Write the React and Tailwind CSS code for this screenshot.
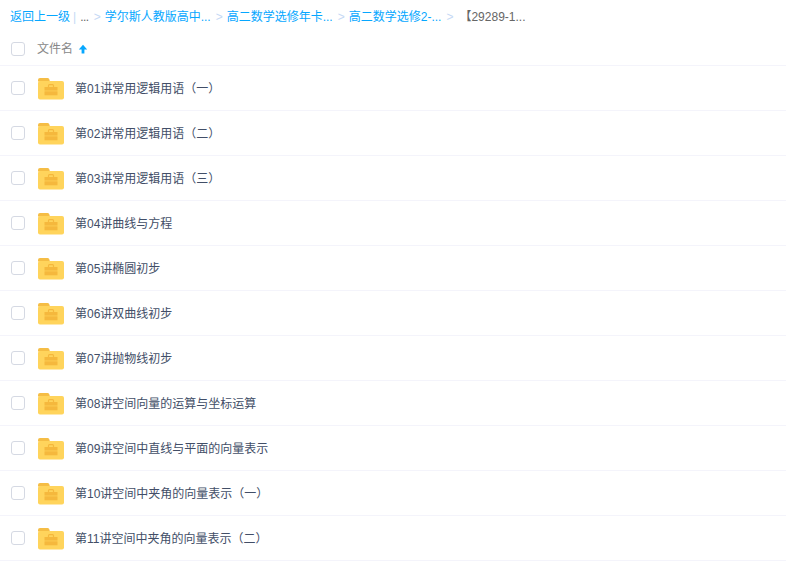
import React from "react";

const files = [
  "第01讲常用逻辑用语(一)",
  "第02讲常用逻辑用语(二)",
  "第03讲常用逻辑用语(三)",
  "第04讲曲线与方程",
  "第05讲椭圆初步",
  "第06讲双曲线初步",
  "第07讲抛物线初步",
  "第08讲空间向量的运算与坐标运算",
  "第09讲空间中直线与平面的向量表示",
  "第10讲空间中夹角的向量表示(一)",
  "第11讲空间中夹角的向量表示(二)",
].map((s) => s.replace("(", "（").replace(")", "）"));

const crumbs = ["学尔斯人教版高中...", "高二数学选修年卡...", "高二数学选修2-..."];

const Sep = () => <span className="text-[#c5d9f5] ml-[5px] mr-[4px]">&gt;</span>;

const Checkbox = () => (
  <span className="block w-[14px] h-[14px] rounded-[3px] border border-[#d5d9e3] bg-white" />
);

const FolderIcon = () => (
  <svg width="26" height="22" viewBox="0 0 26 22">
    <path d="M0 2a2 2 0 0 1 2-2h7.5a2 2 0 0 1 1.6.8L12 3.5H0z" fill="#f5bd45" />
    <rect x="0" y="3" width="26" height="18.5" rx="2" fill="#ffd45c" />
    <path d="M10.5 9V7.6a.9.9 0 0 1 .9-.9h3.2a.9.9 0 0 1 .9.9V9" fill="none" stroke="#f5b83d" strokeWidth="1.2" />
    <rect x="6.5" y="9" width="13" height="3.6" fill="#f5b83d" />
    <rect x="6.5" y="13.3" width="13" height="4" fill="#f5b83d" />
  </svg>
);

export default function App() {
  return (
    <div className="w-[786px] h-[561px] overflow-hidden bg-white text-[12px] font-['Liberation_Sans','Noto_Sans_CJK_SC',sans-serif]">
      <div className="flex items-center h-[33px] pl-[10px] whitespace-nowrap text-[#06a7ff]">
        <span>返回上一级</span>
        <span className="text-[#c5d9f5] ml-[3px] mr-[4px]">|</span>
        <span className="text-[#666] tracking-[-0.5px]">...</span>
        <Sep />
        {crumbs.map((c) => (
          <React.Fragment key={c}>
            <span>{c}</span>
            <Sep />
          </React.Fragment>
        ))}
        <span className="text-[#666] ml-[2px]">【29289-1...</span>
      </div>

      <div className="flex items-center h-[33px] pl-[11px] border-b border-[#f4f4fb]">
        <Checkbox />
        <span className="ml-[12px] text-[#888]">文件名</span>
        <svg className="ml-[5px]" width="10" height="10" viewBox="0 0 10 10">
          <path d="M5 .8 9.2 5.4H6.4V9.4H3.6V5.4H.8z" fill="#06a7ff" />
        </svg>
      </div>

      {files.map((name) => (
        <div key={name} className="flex items-center h-[45px] pl-[11px] border-b border-[#f4f4fb]">
          <Checkbox />
          <span className="ml-[13px] mt-[2px] flex"><FolderIcon /></span>
          <span className="ml-[11px] mt-[2px] text-[#424e67]">{name}</span>
        </div>
      ))}
    </div>
  );
}
